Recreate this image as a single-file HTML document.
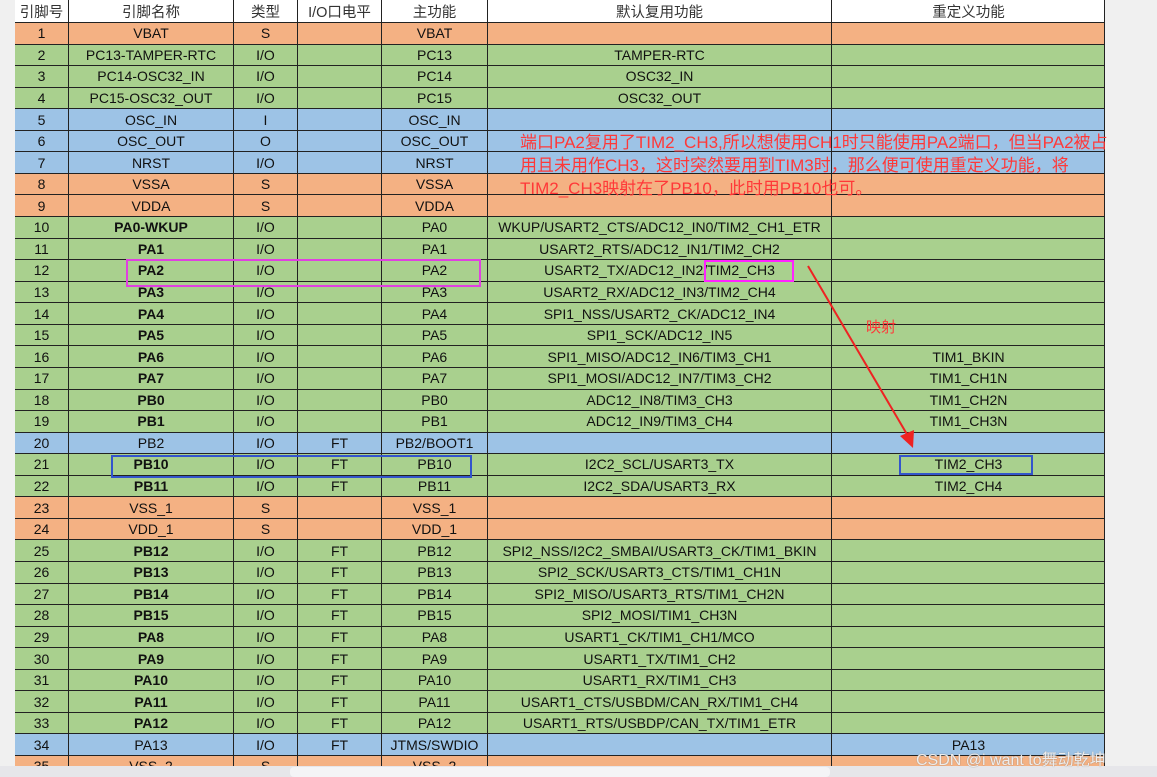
<!DOCTYPE html>
<html><head><meta charset="utf-8"><style>
body{margin:0;width:1157px;height:777px;overflow:hidden;background:#f0f0f0;position:relative;font-family:"Liberation Sans","Noto Sans CJK SC",sans-serif;}
#t{position:absolute;left:15px;top:0;width:1090px;height:766px;background:#fff;overflow:hidden}
.r{position:absolute;left:0;width:1090px;border-bottom:1px solid #222;box-sizing:border-box}
.c{position:absolute;top:0;height:100%;border-left:1px solid #222;text-align:center;font-size:14px;color:#111;display:flex;align-items:center;justify-content:center;box-sizing:border-box;white-space:nowrap}
.o{background:#f4b183}.g{background:#a9d08e}.b{background:#9dc3e6}.w{background:#fff}
.w .c{color:#333;font-size:14.5px}
.box{position:absolute;box-sizing:border-box}
</style></head><body>
<div id="t"></div>
<div style="position:absolute;left:0;top:766px;width:1157px;height:11px;background:#e6e6ea"></div>
<div style="position:absolute;left:290px;top:767px;width:540px;height:10px;background:#f4f4f6;border-radius:4px"></div>
<div style="position:absolute;left:520px;top:131px;width:640px;color:#ff3838;font-size:17px;line-height:23px;white-space:nowrap">端口PA2复用了TIM2_CH3,所以想使用CH1时只能使用PA2端口，但当PA2被占<br>用且未用作CH3，这时突然要用到TIM3时，那么便可使用重定义功能，将<br>TIM2_CH3映射在了PB10，此时用PB10也可。</div>
<div style="position:absolute;left:866px;top:316px;color:#ff3838;font-size:15px">映射</div>
<div class="box" style="left:126px;top:259px;width:355px;height:28px;border:2px solid #e040e0"></div>
<div class="box" style="left:704px;top:260px;width:90px;height:22px;border:2px solid #ff22ff"></div>
<div class="box" style="left:111px;top:455px;width:361px;height:23px;border:2px solid #3355cc"></div>
<div class="box" style="left:899px;top:455px;width:134px;height:20px;border:2px solid #3355cc"></div>
<svg style="position:absolute;left:0;top:0" width="1157" height="777"><line x1="808" y1="266" x2="908" y2="436" stroke="#ee2222" stroke-width="2"/><polygon points="913,448 900,436 914,430" fill="#ee2222"/></svg>
<div style="position:absolute;left:916px;top:746px;color:rgba(255,255,255,.85);font-size:16px;text-shadow:0 0 1px #777">CSDN @i want to舞动乾坤</div>
<script>
(function(){
var cols=[0,53,218,282,366,472,816,1090];
var rows=[
["w","引脚号","引脚名称","类型","I/O口电平","主功能","默认复用功能","重定义功能"],
["o","1","VBAT","S","","VBAT","",""],
["g","2","PC13-TAMPER-RTC","I/O","","PC13","TAMPER-RTC",""],
["g","3","PC14-OSC32_IN","I/O","","PC14","OSC32_IN",""],
["g","4","PC15-OSC32_OUT","I/O","","PC15","OSC32_OUT",""],
["b","5","OSC_IN","I","","OSC_IN","",""],
["b","6","OSC_OUT","O","","OSC_OUT","",""],
["b","7","NRST","I/O","","NRST","",""],
["o","8","VSSA","S","","VSSA","",""],
["o","9","VDDA","S","","VDDA","",""],
["g","10","*PA0-WKUP","I/O","","PA0","WKUP/USART2_CTS/ADC12_IN0/TIM2_CH1_ETR",""],
["g","11","*PA1","I/O","","PA1","USART2_RTS/ADC12_IN1/TIM2_CH2",""],
["g","12","*PA2","I/O","","PA2","USART2_TX/ADC12_IN2/TIM2_CH3",""],
["g","13","*PA3","I/O","","PA3","USART2_RX/ADC12_IN3/TIM2_CH4",""],
["g","14","*PA4","I/O","","PA4","SPI1_NSS/USART2_CK/ADC12_IN4",""],
["g","15","*PA5","I/O","","PA5","SPI1_SCK/ADC12_IN5",""],
["g","16","*PA6","I/O","","PA6","SPI1_MISO/ADC12_IN6/TIM3_CH1","TIM1_BKIN"],
["g","17","*PA7","I/O","","PA7","SPI1_MOSI/ADC12_IN7/TIM3_CH2","TIM1_CH1N"],
["g","18","*PB0","I/O","","PB0","ADC12_IN8/TIM3_CH3","TIM1_CH2N"],
["g","19","*PB1","I/O","","PB1","ADC12_IN9/TIM3_CH4","TIM1_CH3N"],
["b","20","PB2","I/O","FT","PB2/BOOT1","",""],
["g","21","*PB10","I/O","FT","PB10","I2C2_SCL/USART3_TX","TIM2_CH3"],
["g","22","*PB11","I/O","FT","PB11","I2C2_SDA/USART3_RX","TIM2_CH4"],
["o","23","VSS_1","S","","VSS_1","",""],
["o","24","VDD_1","S","","VDD_1","",""],
["g","25","*PB12","I/O","FT","PB12","SPI2_NSS/I2C2_SMBAI/USART3_CK/TIM1_BKIN",""],
["g","26","*PB13","I/O","FT","PB13","SPI2_SCK/USART3_CTS/TIM1_CH1N",""],
["g","27","*PB14","I/O","FT","PB14","SPI2_MISO/USART3_RTS/TIM1_CH2N",""],
["g","28","*PB15","I/O","FT","PB15","SPI2_MOSI/TIM1_CH3N",""],
["g","29","*PA8","I/O","FT","PA8","USART1_CK/TIM1_CH1/MCO",""],
["g","30","*PA9","I/O","FT","PA9","USART1_TX/TIM1_CH2",""],
["g","31","*PA10","I/O","FT","PA10","USART1_RX/TIM1_CH3",""],
["g","32","*PA11","I/O","FT","PA11","USART1_CTS/USBDM/CAN_RX/TIM1_CH4",""],
["g","33","*PA12","I/O","FT","PA12","USART1_RTS/USBDP/CAN_TX/TIM1_ETR",""],
["b","34","PA13","I/O","FT","JTMS/SWDIO","","PA13"],
["o","35","VSS_2","S","","VSS_2","",""]];
var h='';
for(var i=0;i<rows.length;i++){
 var ty=i==0?0:23+(i-1)*21.56, ht=i==0?23:21.56;
 h+='<div class="r '+rows[i][0]+'" style="top:'+ty+'px;height:'+ht+'px">';
 for(var j=0;j<7;j++){var s=rows[i][j+1],b='';if(s.charAt(0)=='*'){s=s.slice(1);b='font-weight:bold;';}
  h+='<div class="c" style="'+b+'left:'+cols[j]+'px;width:'+(cols[j+1]-cols[j])+'px;'+(j==0?'border-left:none;':'')+'">'+s+'</div>';}
 h+='<div class="c" style="left:1089px;width:1px"></div></div>';
}
document.getElementById('t').innerHTML=h;
})();
</script>
</body></html>
